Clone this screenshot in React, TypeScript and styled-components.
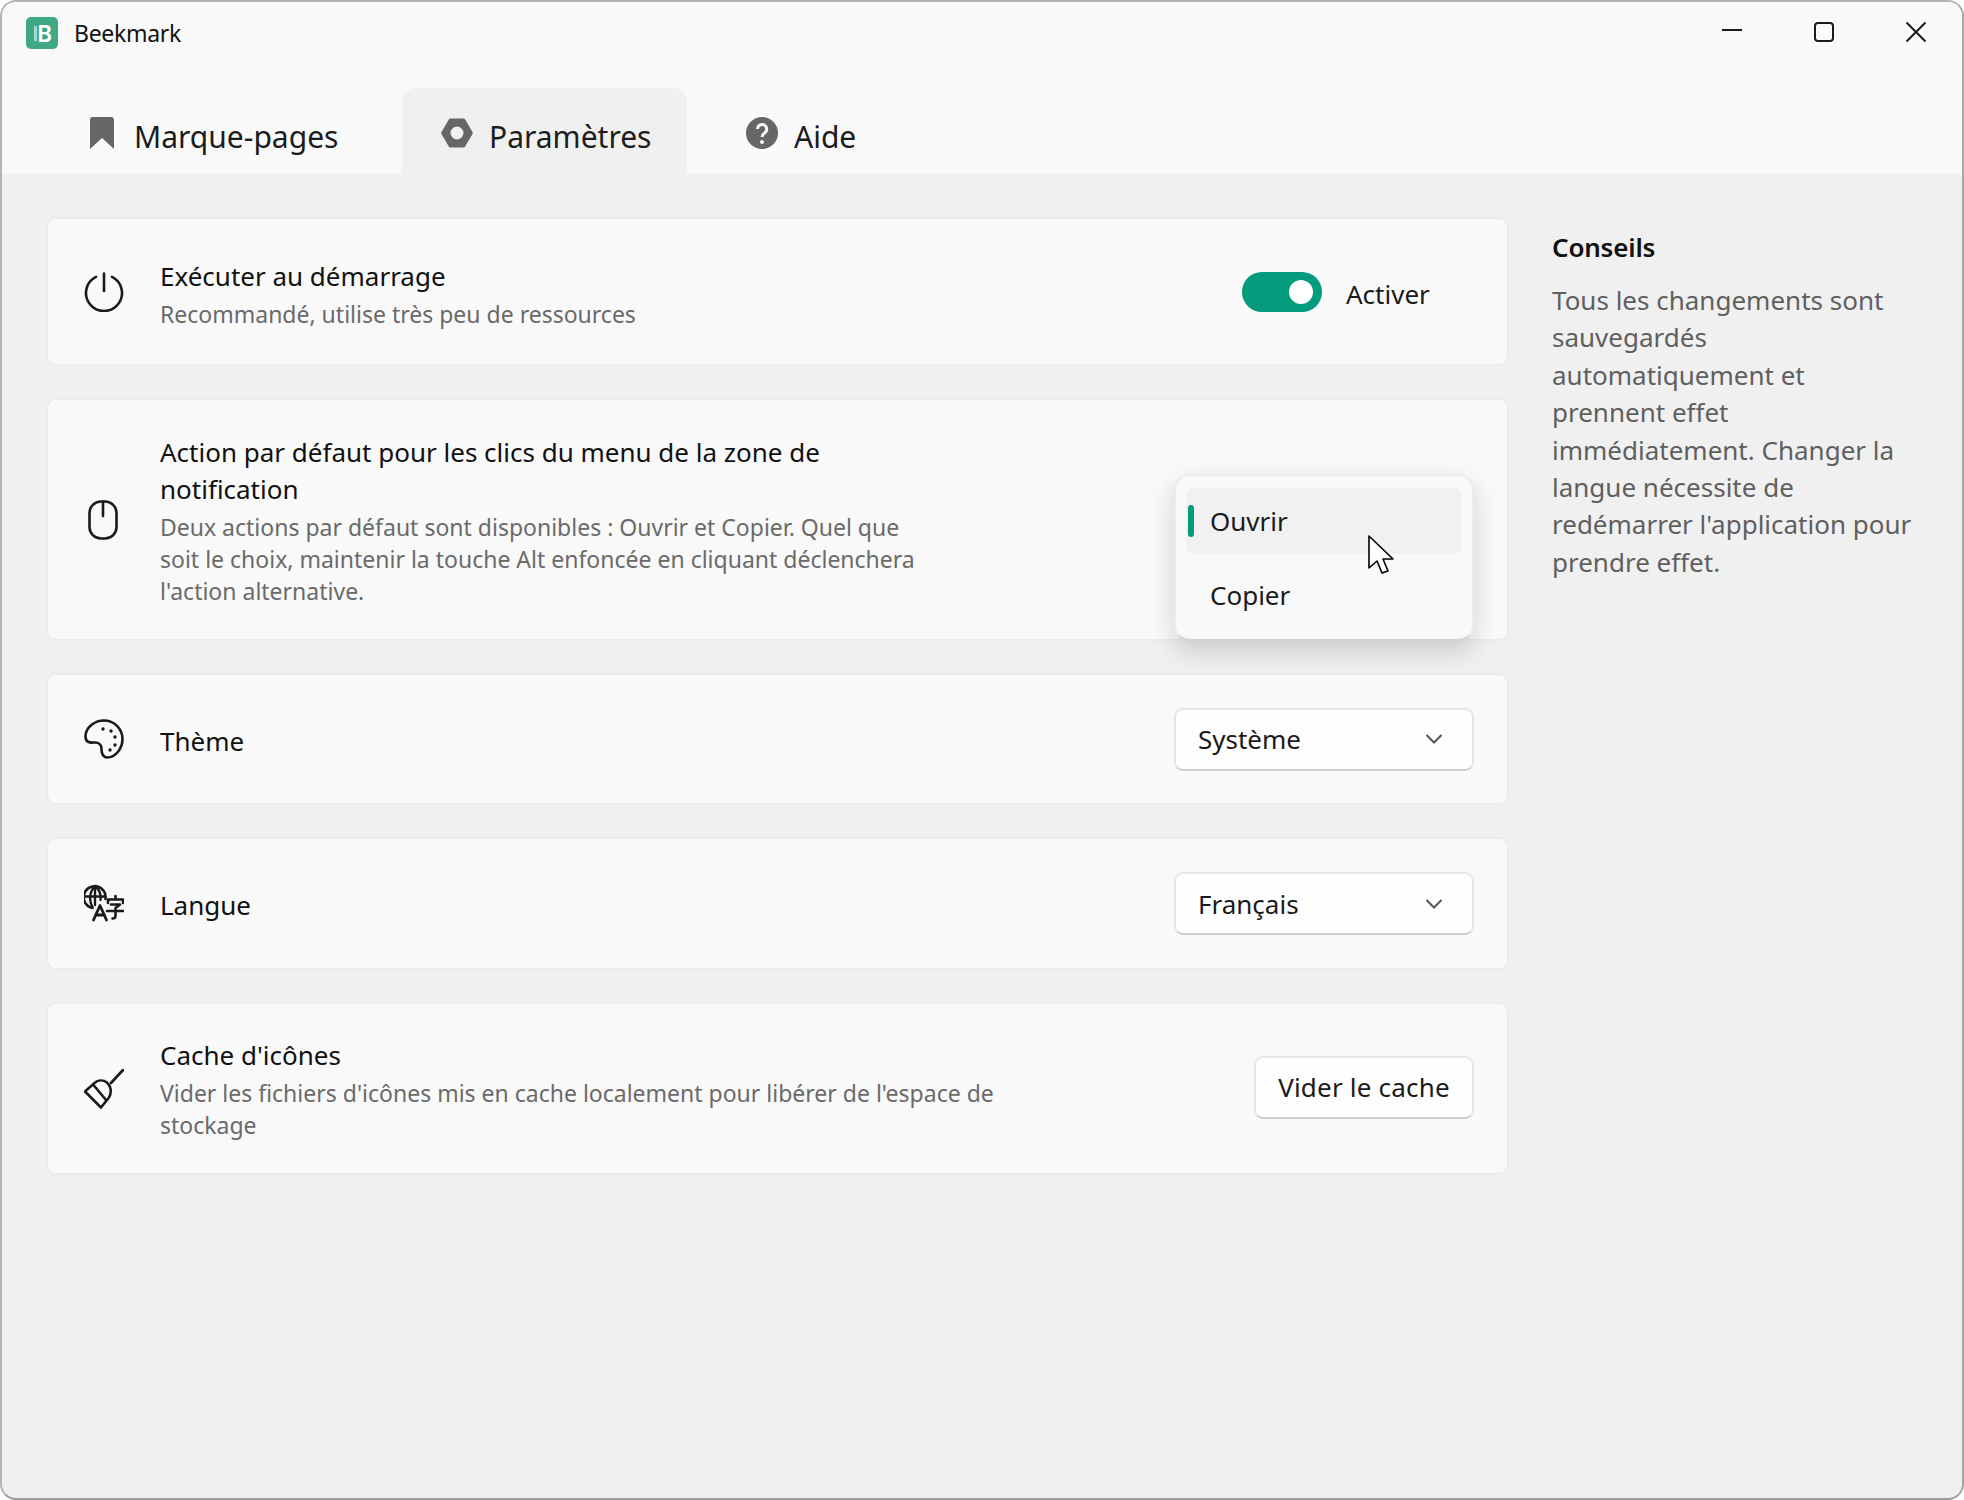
import React from 'react';
import styled, { createGlobalStyle } from 'styled-components';

const GlobalStyle = createGlobalStyle`
  html, body {
    margin: 0;
    padding: 0;
    background: #ffffff;
  }
  * {
    box-sizing: border-box;
  }
  body {
    font-family: "Noto Sans", "Open Sans", sans-serif;
  }
`;

// window chrome
const Window = styled.div`
  width: 1964px;
  height: 1500px;
  display: flex;
  flex-direction: column;
  border: 2px solid #b4b4b4;
  border-bottom-color: #9c9c9c;
  border-right-color: #a8a8a8;
  border-radius: 16px;
  overflow: hidden;
  background: #f0f0f0;
`;

const TitleBar = styled.header`
  height: 62px;
  display: flex;
  align-items: center;
  justify-content: space-between;
  padding-left: 24px;
  background: #f9f9f9;
`;

const AppTitle = styled.div`
  display: flex;
  align-items: center;
  gap: 16px;
  font-size: 23px;
  letter-spacing: -0.3px;
  color: #111111;
`;

const Logo = styled.span`
  position: relative;
  width: 32px;
  height: 32px;
  display: flex;
  align-items: center;
  justify-content: center;
  border-radius: 5px;
  background: #3fa884;
  color: #ffffff;
  font-size: 23px;
  font-weight: 600;
  line-height: 1;
  padding-left: 5px;

  &::before {
    content: '';
    position: absolute;
    left: 8px;
    top: 9px;
    width: 3px;
    height: 15px;
    background: rgba(255, 255, 255, 0.55);
  }
`;

const WindowControls = styled.div`
  display: flex;
  height: 100%;
`;

const ControlButton = styled.button`
  width: 92px;
  height: 100%;
  padding: 0 0 3px;
  display: flex;
  align-items: center;
  justify-content: center;
  border: none;
  background: transparent;
  color: #1a1a1a;
`;

const TabBar = styled.nav`
  display: flex;
  gap: 20px;
  height: 110px;
  padding: 24px 0 0 45px;
  background: #f9f9f9;
`;

const Tab = styled.div<{ $active?: boolean; $width: number }>`
  width: ${props => props.$width}px;
  height: 86px;
  display: flex;
  align-items: center;
  gap: 16px;
  padding: 10px 0 0 39px;
  border-radius: 14px 14px 0 0;
  background: ${props => (props.$active ? '#f0f0f0' : 'transparent')};
  color: #1c1c1c;
  font-size: 30px;
`;

const TabIcon = styled.svg`
  width: 32px;
  height: 32px;
  flex: none;
  margin-top: -6px;
  color: #666666;
`;

// settings area
const Content = styled.main`
  flex: 1;
  display: flex;
  gap: 43px;
  padding: 43px 0 0 44px;
`;

const SettingsColumn = styled.div`
  width: 1463px;
  flex: none;
  display: flex;
  flex-direction: column;
  gap: 32px;
`;

const Card = styled.section<{ $height: number }>`
  height: ${props => props.$height}px;
  display: flex;
  align-items: center;
  gap: 36px;
  padding: 0 33px 0 36px;
  border: 2px solid #ececec;
  border-radius: 10px;
  background: #f9f9f9;
`;

const CardIcon = styled.svg`
  width: 40px;
  height: 40px;
  flex: none;
  fill: none;
  stroke: #1a1a1a;
  stroke-width: 2.6;
  stroke-linecap: round;
  stroke-linejoin: round;
`;

const CardText = styled.div<{ $shift?: number }>`
  flex: 1;
  min-width: 0;
  display: flex;
  flex-direction: column;
  gap: 3px;
  padding-top: ${props => props.$shift ?? 5}px;
`;

const CardTitle = styled.h3<{ $maxWidth?: number }>`
  margin: 0;
  max-width: ${props => props.$maxWidth ?? 900}px;
  font-size: 26px;
  font-weight: 400;
  line-height: 37px;
  color: #111111;
`;

const CardDescription = styled.p<{ $maxWidth?: number }>`
  margin: 0;
  max-width: ${props => props.$maxWidth ?? 900}px;
  font-size: 23px;
  line-height: 32px;
  color: #6a6a6a;
`;

const ToggleGroup = styled.div`
  width: 232px;
  flex: none;
  display: flex;
  align-items: center;
  gap: 24px;
`;

const ToggleLabel = styled.span`
  padding-top: 4px;
  font-size: 26px;
  color: #1a1a1a;
`;

const Toggle = styled.span`
  position: relative;
  width: 80px;
  height: 40px;
  border-radius: 20px;
  background: #029b7c;

  &::after {
    content: '';
    position: absolute;
    top: 8px;
    right: 9px;
    width: 24px;
    height: 24px;
    border-radius: 50%;
    background: #ffffff;
  }
`;

const Select = styled.div`
  width: 300px;
  height: 63px;
  flex: none;
  display: flex;
  align-items: center;
  justify-content: space-between;
  padding: 0 29px 0 22px;
  border: 2px solid #e6e6e6;
  border-bottom-color: #cfcfcf;
  border-radius: 9px;
  background: #fefefe;
  font-size: 26px;
  color: #1a1a1a;
`;

const Chevron = styled.svg`
  width: 18px;
  height: 12px;
  fill: none;
  stroke: #555555;
  stroke-width: 2;
`;

const MenuAnchor = styled.div`
  position: relative;
  width: 300px;
  height: 63px;
  flex: none;
`;

const Menu = styled.div`
  position: absolute;
  top: -14px;
  left: 0;
  width: 300px;
  height: 167px;
  padding: 12px 10px;
  border: 2px solid #ececec;
  border-bottom-color: #d2d2d2;
  border-radius: 16px;
  background: #f9f9f9;
  box-shadow: 0 10px 26px rgba(0, 0, 0, 0.16);
`;

const MenuItem = styled.div<{ $selected?: boolean }>`
  position: relative;
  height: 66px;
  display: flex;
  align-items: center;
  margin-bottom: 8px;
  padding-left: 24px;
  border-radius: 8px;
  background: ${props => (props.$selected ? '#f1f1f1' : 'transparent')};
  font-size: 26px;
  color: #1a1a1a;

  ${props =>
    props.$selected &&
    `&::before {
      content: '';
      position: absolute;
      left: 2px;
      top: 17px;
      width: 6px;
      height: 32px;
      border-radius: 3px;
      background: #029b7c;
    }`}
`;

const Pointer = styled.svg`
  position: absolute;
  left: 192px;
  top: 59px;
  width: 26px;
  height: 40px;
`;

const ActionButton = styled.button`
  width: 220px;
  height: 63px;
  flex: none;
  margin-top: -3px;
  border: 2px solid #e6e6e6;
  border-bottom-color: #cfcfcf;
  border-radius: 9px;
  background: #fefefe;
  font-family: inherit;
  font-size: 26px;
  letter-spacing: 0.2px;
  color: #1a1a1a;
  padding: 0;
`;

// tips column
const Tips = styled.aside`
  width: 366px;
  padding-top: 12px;
`;

const TipsTitle = styled.h4`
  margin: 0 0 16px;
  font-size: 26px;
  font-weight: 600;
  line-height: 37px;
  letter-spacing: -0.2px;
  color: #111111;
`;

const TipsText = styled.p`
  margin: 0;
  font-size: 26px;
  line-height: 37.4px;
  color: #5f5f5f;
`;

const ChevronIcon = () => (
  <Chevron viewBox="0 0 18 12">
    <path d="M1.5 2 L9 9.5 L16.5 2" />
  </Chevron>
);

export default function App() {
  return (
    <>
      <GlobalStyle />
      <Window>
        <TitleBar>
          <AppTitle>
            <Logo>B</Logo>
            Beekmark
          </AppTitle>
          <WindowControls>
            <ControlButton aria-label="Réduire">
              <svg width="22" height="22" viewBox="0 0 22 22" fill="none" stroke="currentColor" strokeWidth="2">
                <path d="M1 9 H21" />
              </svg>
            </ControlButton>
            <ControlButton aria-label="Agrandir">
              <svg width="22" height="22" viewBox="0 0 22 22" fill="none" stroke="currentColor" strokeWidth="2">
                <rect x="2" y="2" width="18" height="18" rx="3" />
              </svg>
            </ControlButton>
            <ControlButton aria-label="Fermer">
              <svg width="22" height="22" viewBox="0 0 22 22" fill="none" stroke="currentColor" strokeWidth="2">
                <path d="M1.5 1.5 L20.5 20.5 M20.5 1.5 L1.5 20.5" />
              </svg>
            </ControlButton>
          </WindowControls>
        </TitleBar>

        <TabBar>
          <Tab $width={335}>
            <TabIcon viewBox="0 0 32 32">
              <path fill="currentColor" d="M7 0 H25 a3 3 0 0 1 3 3 V32 L16 21 L4 32 V3 a3 3 0 0 1 3 -3 Z" />
            </TabIcon>
            Marque-pages
          </Tab>
          <Tab $active $width={285}>
            <TabIcon viewBox="0 0 32 32">
              <path
                fill="currentColor"
                fillRule="evenodd"
                d="M9.5 1.5 H22.5 a2 2 0 0 1 1.7 1 L31.5 15 a2 2 0 0 1 0 2 L24.2 29.5 a2 2 0 0 1 -1.7 1 H9.5 a2 2 0 0 1 -1.7 -1 L0.5 17 a2 2 0 0 1 0 -2 L7.8 2.5 a2 2 0 0 1 1.7 -1 Z M16 9.5 a6.5 6.5 0 1 0 0 13 a6.5 6.5 0 1 0 0 -13 Z"
              />
            </TabIcon>
            Paramètres
          </Tab>
          <Tab $width={192}>
            <TabIcon viewBox="0 0 32 32">
              <circle cx="16" cy="16" r="16" fill="currentColor" />
              <path
                d="M11.5 12 a4.6 4.6 0 1 1 7.4 3.7 c-1.8 1.3 -2.9 2.3 -2.9 4.3"
                fill="none"
                stroke="#f9f9f9"
                strokeWidth="3"
              />
              <circle cx="16" cy="25" r="2" fill="#f9f9f9" />
            </TabIcon>
            Aide
          </Tab>
        </TabBar>

        <Content>
          <SettingsColumn>
            <Card $height={149}>
              <CardIcon viewBox="0 0 40 40">
                <path d="M20 1.5 V19" />
                <path d="M12 4.9 A18 18 0 1 0 28 4.9" />
              </CardIcon>
              <CardText>
                <CardTitle>Exécuter au démarrage</CardTitle>
                <CardDescription>Recommandé, utilise très peu de ressources</CardDescription>
              </CardText>
              <ToggleGroup>
                <Toggle />
                <ToggleLabel>Activer</ToggleLabel>
              </ToggleGroup>
            </Card>

            <Card $height={243}>
              <CardIcon viewBox="0 0 40 40">
                <rect x="5.5" y="1.5" width="27" height="37" rx="11.5" />
                <path d="M19 2 V16" />
              </CardIcon>
              <CardText $shift={2}>
                <CardTitle $maxWidth={760}>Action par défaut pour les clics du menu de la zone de notification</CardTitle>
                <CardDescription $maxWidth={770}>
                  Deux actions par défaut sont disponibles : Ouvrir et Copier. Quel que soit le choix, maintenir la
                  touche Alt enfoncée en cliquant déclenchera l'action alternative.
                </CardDescription>
              </CardText>
              <MenuAnchor>
                <Menu>
                  <MenuItem $selected>Ouvrir</MenuItem>
                  <MenuItem>Copier</MenuItem>
                  <Pointer viewBox="0 0 26 40">
                    <path
                      d="M1 1 V33 L9 26 L14 38 L20 36 L15 24 L25 24 Z"
                      fill="#ffffff"
                      stroke="#000000"
                      strokeWidth="1.6"
                      strokeLinejoin="round"
                    />
                  </Pointer>
                </Menu>
              </MenuAnchor>
            </Card>

            <Card $height={132}>
              <CardIcon viewBox="0 0 40 40">
                <path d="M20 1.5 C30 1.5 38.5 9.5 38.5 20 C38.5 30 31 38.5 23.5 38.5 C18.5 38.5 17.5 34 17.5 30 C17.5 26 15 23.5 11 23.5 C8 23.5 1.5 25 1.5 17.5 C1.5 9 10 1.5 20 1.5 Z" />
                <g fill="#1a1a1a" stroke="none">
                  <circle cx="19" cy="10" r="1.7" />
                  <circle cx="27" cy="12" r="1.7" />
                  <circle cx="31" cy="18" r="1.7" />
                  <circle cx="31" cy="26" r="1.7" />
                  <circle cx="26" cy="31" r="1.7" />
                </g>
              </CardIcon>
              <CardText $shift={4}>
                <CardTitle>Thème</CardTitle>
              </CardText>
              <Select>
                Système
                <ChevronIcon />
              </Select>
            </Card>

            <Card $height={133}>
              <CardIcon viewBox="0 0 40 40">
                <path d="M21.5 15 A11 11 0 1 0 8.5 24" />
                <path d="M0.5 12.5 H21 M11 2 V21 M11 2 C5 8 5 17 8.5 23 M11 2 C16 6 17 11 16.5 16" strokeWidth="2.4" />
                <path d="M9.5 36 L16 21.5 L22.5 36 M11.8 31 H20.2" strokeWidth="2.8" />
                <path d="M31.5 12 V15 M24 19 V15.5 H39 V19 M27 20.5 H36 L31.5 24 M23 27 H40 M31.5 24 V32 Q31.5 34.5 28.5 34.5" strokeWidth="2.6" />
              </CardIcon>
              <CardText $shift={4}>
                <CardTitle>Langue</CardTitle>
              </CardText>
              <Select>
                Français
                <ChevronIcon />
              </Select>
            </Card>

            <Card $height={173}>
              <CardIcon viewBox="0 0 40 40">
                <path d="M39 1 L27 14" />
                <path d="M1 22.5 L17 38.5 L25 28.5 C28 23 27 17 23 13.5 C19 10.5 14 11 10.5 14 Z" />
                <path d="M9.5 16 L22 31" />
              </CardIcon>
              <CardText $shift={1}>
                <CardTitle>Cache d'icônes</CardTitle>
                <CardDescription $maxWidth={860}>
                  Vider les fichiers d'icônes mis en cache localement pour libérer de l'espace de stockage
                </CardDescription>
              </CardText>
              <ActionButton>Vider le cache</ActionButton>
            </Card>
          </SettingsColumn>

          <Tips>
            <TipsTitle>Conseils</TipsTitle>
            <TipsText>
              Tous les changements sont sauvegardés automatiquement et prennent effet immédiatement. Changer la langue
              nécessite de redémarrer l'application pour prendre effet.
            </TipsText>
          </Tips>
        </Content>
      </Window>
    </>
  );
}
